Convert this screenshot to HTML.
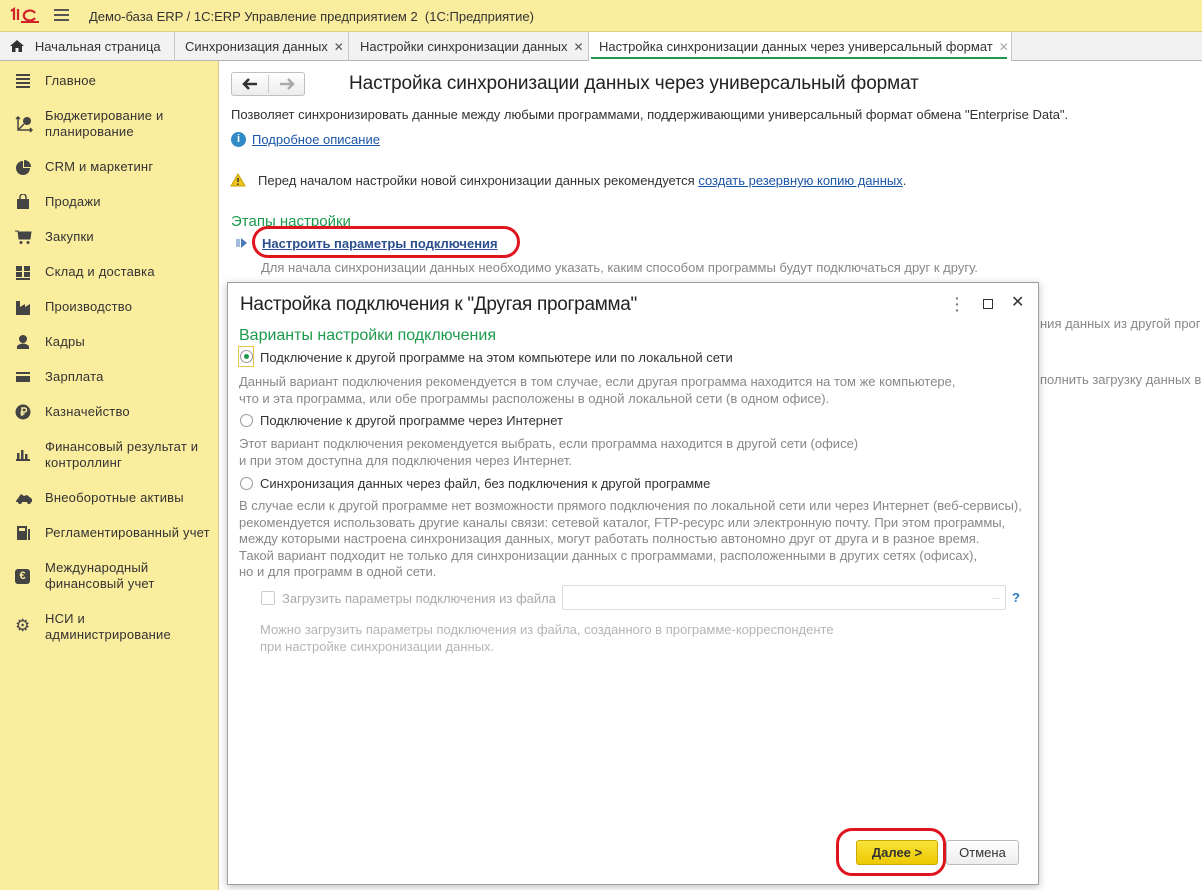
<!DOCTYPE html>
<html><head><meta charset="utf-8"><style>
*{margin:0;padding:0;box-sizing:border-box}
body{width:1202px;height:890px;overflow:hidden;background:#fff;font-family:"Liberation Sans",Arial,sans-serif;font-size:13px;color:#333;position:relative}
.a{position:absolute;white-space:nowrap}
#top{left:0;top:0;width:1202px;height:32px;background:#fbed9e;border-bottom:1px solid #d9cc85}
#tabs{left:0;top:32px;width:1202px;height:29px;background:#f2f2f2;border-bottom:1px solid #b5b5b5}
.tab{position:absolute;top:0;height:29px;border-right:1px solid #c8c8c8;padding:7px 0 0 8px;font-size:13px;color:#333}
.x{color:#555;font-size:12px;margin-left:6px}
#side{left:0;top:61px;width:219px;height:829px;background:#fbed9e;border-right:1px solid #d6c98a}
.si{position:absolute;left:45px;font-size:13px;color:#333;line-height:16px;letter-spacing:0.2px}
.ic{position:absolute;left:15px}
.lnk{color:#1c56a8;text-decoration:underline}
.g{color:#888}
.gr{color:#1c9a4c}
#dlg{left:227px;top:282px;width:812px;height:603px;background:#fff;border:1px solid #a0a0a0;box-shadow:0 2px 8px rgba(0,0,0,.25)}
.d{position:absolute;white-space:nowrap}
.rad{position:absolute;width:13px;height:13px;border:1px solid #999;border-radius:50%;background:#fff}
</style></head><body>
<div class="a" id="top"></div>
<svg class="a" style="left:9px;top:6px" width="30" height="18" viewBox="0 0 30 18"><path d="M2 5 L5 3 V14 M9 3 V14" stroke="#d0202a" stroke-width="2.2" fill="none"/><path d="M26 7 A6 5 0 1 0 26 12" stroke="#d0202a" stroke-width="2.2" fill="none"/><path d="M12 16 H30" stroke="#d0202a" stroke-width="2"/></svg>
<div class="a" style="left:54px;top:9px;width:15px;height:12px;border-top:2px solid #555;border-bottom:2px solid #555"><div style="margin-top:3px;height:2px;background:#555"></div></div>
<div class="a" style="left:89px;top:9px;font-size:13px;color:#333">Демо-база ERP / 1С:ERP Управление предприятием 2 &nbsp;(1С:Предприятие)</div>

<div class="a" id="tabs">
 <div class="tab" style="left:0;width:175px;padding-left:10px"><svg width="14" height="12" viewBox="0 0 14 12" style="vertical-align:-1px"><path d="M7 0 L14 6 H12 V12 H8.5 V8 H5.5 V12 H2 V6 H0 Z" fill="#333"/></svg>&nbsp;&nbsp; Начальная страница</div>
 <div class="tab" style="left:175px;width:174px;padding-left:10px">Синхронизация данных<span class="x">✕</span></div>
 <div class="tab" style="left:349px;width:240px;padding-left:11px">Настройки синхронизации данных<span class="x">✕</span></div>
 <div class="tab" style="left:589px;width:423px;background:#fff;padding-left:10px">Настройка синхронизации данных через универсальный формат<span class="x" style="color:#aaa">✕</span><div style="position:absolute;left:2px;right:4px;bottom:2px;height:2px;background:#1d9a4a"></div></div>
</div>

<div class="a" id="side"></div>
<svg class="ic" style="top:74px" width="16" height="14"><path d="M1 1H15M1 5H15M1 9H15M1 13H15" stroke="#444" stroke-width="2"/></svg>
<div class="si" style="top:73px">Главное</div>
<svg class="ic" style="top:115px" width="18" height="18"><path d="M3 2V15H17M1 4L3 2L5 4M15 13L17 15L15 17M4 14L9 9" stroke="#444" stroke-width="1.5" fill="none"/><circle cx="12" cy="6" r="4" fill="#444"/></svg>
<div class="si" style="top:108px">Бюджетирование и<br>планирование</div>
<svg class="ic" style="top:160px" width="16" height="16"><path d="M8 8V1A7 7 0 1 0 15 8Z" fill="#444"/><path d="M9 0A7 7 0 0 1 16 7H9Z" fill="#444"/></svg>
<div class="si" style="top:159px">CRM и маркетинг</div>
<svg class="ic" style="top:194px" width="16" height="16"><path d="M5 5V3A3 3 0 0 1 11 3V5" stroke="#444" stroke-width="1.5" fill="none"/><rect x="2" y="5" width="12" height="10" fill="#444"/></svg>
<div class="si" style="top:194px">Продажи</div>
<svg class="ic" style="top:230px" width="17" height="15"><path d="M0 1H3L4 9H15L16 2H3" fill="#444" stroke="#444"/><circle cx="6" cy="12.5" r="1.5" fill="#444"/><circle cx="13" cy="12.5" r="1.5" fill="#444"/></svg>
<div class="si" style="top:229px">Закупки</div>
<svg class="ic" style="top:265px" width="16" height="15"><rect x="1" y="1" width="6" height="5" fill="#444"/><rect x="9" y="1" width="6" height="5" fill="#444"/><rect x="1" y="7" width="6" height="5" fill="#444"/><rect x="9" y="7" width="6" height="5" fill="#444"/><rect x="1" y="13" width="14" height="2" fill="#444"/></svg>
<div class="si" style="top:264px">Склад и доставка</div>
<svg class="ic" style="top:300px" width="16" height="15"><path d="M1 15V1H5V7L10 4V7L15 4V15Z" fill="#444"/></svg>
<div class="si" style="top:299px">Производство</div>
<svg class="ic" style="top:334px" width="16" height="16"><circle cx="8" cy="5" r="4" fill="#444"/><path d="M2 15V12Q8 7 14 12V15Z" fill="#444"/></svg>
<div class="si" style="top:334px">Кадры</div>
<svg class="ic" style="top:371px" width="16" height="12"><rect x="1" y="1" width="14" height="10" fill="#444"/><rect x="1" y="3" width="14" height="2" fill="#fbed9e"/></svg>
<div class="si" style="top:369px">Зарплата</div>
<svg class="ic" style="top:404px" width="16" height="16"><circle cx="8" cy="8" r="7.5" fill="#444"/><path d="M7 12V4H9.5A2 2 0 0 1 9.5 8H5.5M5.5 10H9.5" stroke="#fbed9e" stroke-width="1.5" fill="none"/></svg>
<div class="si" style="top:404px">Казначейство</div>
<svg class="ic" style="top:447px" width="16" height="14"><path d="M1 13H15" stroke="#444" stroke-width="2"/><rect x="2" y="6" width="2.5" height="6" fill="#444"/><rect x="6" y="3" width="2.5" height="9" fill="#444"/><rect x="10" y="7" width="2.5" height="5" fill="#444"/></svg>
<div class="si" style="top:439px">Финансовый результат и<br>контроллинг</div>
<svg class="ic" style="top:491px" width="18" height="14"><path d="M1 10L6 3L9 5L12 4L17 8V11H1Z" fill="#444"/><circle cx="5" cy="11" r="2" fill="#444"/><circle cx="14" cy="11" r="2" fill="#444"/></svg>
<div class="si" style="top:490px">Внеоборотные активы</div>
<svg class="ic" style="top:525px" width="16" height="16"><rect x="2" y="1" width="10" height="14" fill="#444"/><rect x="13" y="4" width="2" height="11" fill="#444"/><rect x="4" y="3" width="6" height="3" fill="#fbed9e"/></svg>
<div class="si" style="top:525px">Регламентированный учет</div>
<div class="ic" style="top:569px;width:15px;height:15px;background:#444;border-radius:3px;color:#fbed9e;font-size:11px;font-weight:bold;text-align:center;line-height:15px">€</div>
<div class="si" style="top:560px">Международный<br>финансовый учет</div>
<div class="ic" style="top:618px;color:#444;font-size:17px;line-height:16px">⚙</div>
<div class="si" style="top:611px">НСИ и<br>администрирование</div>

<!-- main content -->
<div class="a" style="left:231px;top:72px;width:74px;height:24px;border:1px solid #c0c0c0;border-radius:3px;background:linear-gradient(#fff,#ececec)"><div style="position:absolute;left:36px;top:2px;bottom:2px;width:1px;background:#ccc"></div>
<svg style="position:absolute;left:10px;top:5px" width="16" height="12"><path d="M15 6H3M7 1L2 6L7 11" stroke="#333" stroke-width="2.5" fill="none"/></svg>
<svg style="position:absolute;left:47px;top:5px" width="16" height="12"><path d="M1 6H13M9 1L14 6L9 11" stroke="#aaa" stroke-width="2.5" fill="none"/></svg></div>
<div class="a" style="left:349px;top:73px;font-size:19px;color:#222;letter-spacing:-0.1px">Настройка синхронизации данных через универсальный формат</div>
<div class="a" style="left:231px;top:107px">Позволяет синхронизировать данные между любыми программами, поддерживающими универсальный формат обмена "Enterprise Data".</div>
<div class="a" style="left:231px;top:132px;width:15px;height:15px;border-radius:50%;background:#2f8ac6;color:#fff;font-weight:bold;font-size:11px;text-align:center;line-height:15px">i</div>
<div class="a lnk" style="left:252px;top:132px">Подробное описание</div>
<svg class="a" style="left:230px;top:173px" width="16" height="14"><path d="M8 1L15 13H1Z" fill="#f0c419" stroke="#c9a000"/><path d="M8 5V9M8 10.5V12" stroke="#333" stroke-width="1.5"/></svg>
<div class="a" style="left:258px;top:173px">Перед началом настройки новой синхронизации данных рекомендуется <span class="lnk">создать резервную копию данных</span>.</div>
<div class="a gr" style="left:231px;top:213px;font-size:15px">Этапы настройки</div>
<svg class="a" style="left:236px;top:238px" width="12" height="10"><path d="M1 1V9M3 1V9" stroke="#4a78b8" stroke-width="1"/><path d="M5 0L11 5L5 10Z" fill="#4a78b8"/></svg>
<div class="a lnk" style="left:262px;top:236px;font-weight:bold;color:#2b4f8c">Настроить параметры подключения</div>
<div class="a" style="left:252px;top:226px;width:268px;height:32px;border:3px solid #e0141e;border-radius:16px"></div>
<div class="a g" style="left:261px;top:260px">Для начала синхронизации данных необходимо указать, каким способом программы будут подключаться друг к другу.</div>
<div class="a g" style="left:1040px;top:316px">ния данных из другой прог</div>
<div class="a g" style="left:1040px;top:372px">полнить загрузку данных в</div>

<!-- dialog -->
<div class="a" id="dlg">
 <div class="d" style="left:12px;top:11px;font-size:19px;color:#222;letter-spacing:-0.3px">Настройка подключения к "Другая программа"</div>
 <div class="d" style="left:727px;top:12px;color:#777;font-size:14px;font-weight:bold;line-height:6px">·<br>·<br>·</div>
 <div class="d" style="left:755px;top:16px;width:10px;height:10px;border:1px solid #333"></div>
 <div class="d" style="left:783px;top:9px;font-size:16px;color:#333">✕</div>
 <div class="d gr" style="left:11px;top:44px;font-size:16px">Варианты настройки подключения</div>
 <div class="d" style="left:10px;top:63px;width:16px;height:21px;border:1px solid #e8c84a"></div>
 <div class="rad" style="left:12px;top:67px"><div style="width:5px;height:5px;border-radius:50%;background:#1d9a4a;margin:3px"></div></div>
 <div class="d" style="left:32px;top:67px">Подключение к другой программе на этом компьютере или по локальной сети</div>
 <div class="d g" style="left:11px;top:90px;line-height:17px">Данный вариант подключения рекомендуется в том случае, если другая программа находится на том же компьютере,<br>что и эта программа, или обе программы расположены в одной локальной сети (в одном офисе).</div>
 <div class="rad" style="left:12px;top:131px"></div>
 <div class="d" style="left:32px;top:130px">Подключение к другой программе через Интернет</div>
 <div class="d g" style="left:11px;top:152px;line-height:17px">Этот вариант подключения рекомендуется выбрать, если программа находится в другой сети (офисе)<br>и при этом доступна для подключения через Интернет.</div>
 <div class="rad" style="left:12px;top:194px"></div>
 <div class="d" style="left:32px;top:193px">Синхронизация данных через файл, без подключения к другой программе</div>
 <div class="d g" style="left:11px;top:215px;line-height:16.5px">В случае если к другой программе нет возможности прямого подключения по локальной сети или через Интернет (веб-сервисы),<br>рекомендуется использовать другие каналы связи: сетевой каталог, FTP-ресурс или электронную почту. При этом программы,<br>между которыми настроена синхронизация данных, могут работать полностью автономно друг от друга и в разное время.<br>Такой вариант подходит не только для синхронизации данных с программами, расположенными в других сетях (офисах),<br>но и для программ в одной сети.</div>
 <div class="d" style="left:33px;top:308px;width:14px;height:14px;border:1px solid #ccc;border-radius:2px"></div>
 <div class="d" style="left:54px;top:308px;color:#aaa">Загрузить параметры подключения из файла</div>
 <div class="d" style="left:334px;top:302px;width:444px;height:25px;border:1px solid #ddd;border-radius:2px"><span style="position:absolute;right:5px;top:5px;color:#bbb;font-size:10px">...</span></div>
 <div class="d" style="left:784px;top:307px;color:#2f7cc4;font-weight:bold">?</div>
 <div class="d" style="left:32px;top:338px;color:#b5b5b5;line-height:17px">Можно загрузить параметры подключения из файла, созданного в программе-корреспонденте<br>при настройке синхронизации данных.</div>
 <div class="d" style="left:628px;top:557px;width:82px;height:25px;border:1px solid #c9a800;border-radius:3px;background:linear-gradient(#f9e43a,#ecc800);font-weight:bold;text-align:center;line-height:23px;color:#333">Далее &gt;</div>
 <div class="d" style="left:718px;top:557px;width:73px;height:25px;border:1px solid #bbb;border-radius:3px;background:linear-gradient(#fff,#eee);text-align:center;line-height:23px;color:#333">Отмена</div>
 <div class="d" style="left:608px;top:545px;width:110px;height:48px;border:3px solid #e0141e;border-radius:16px"></div>
</div>
</body></html>
